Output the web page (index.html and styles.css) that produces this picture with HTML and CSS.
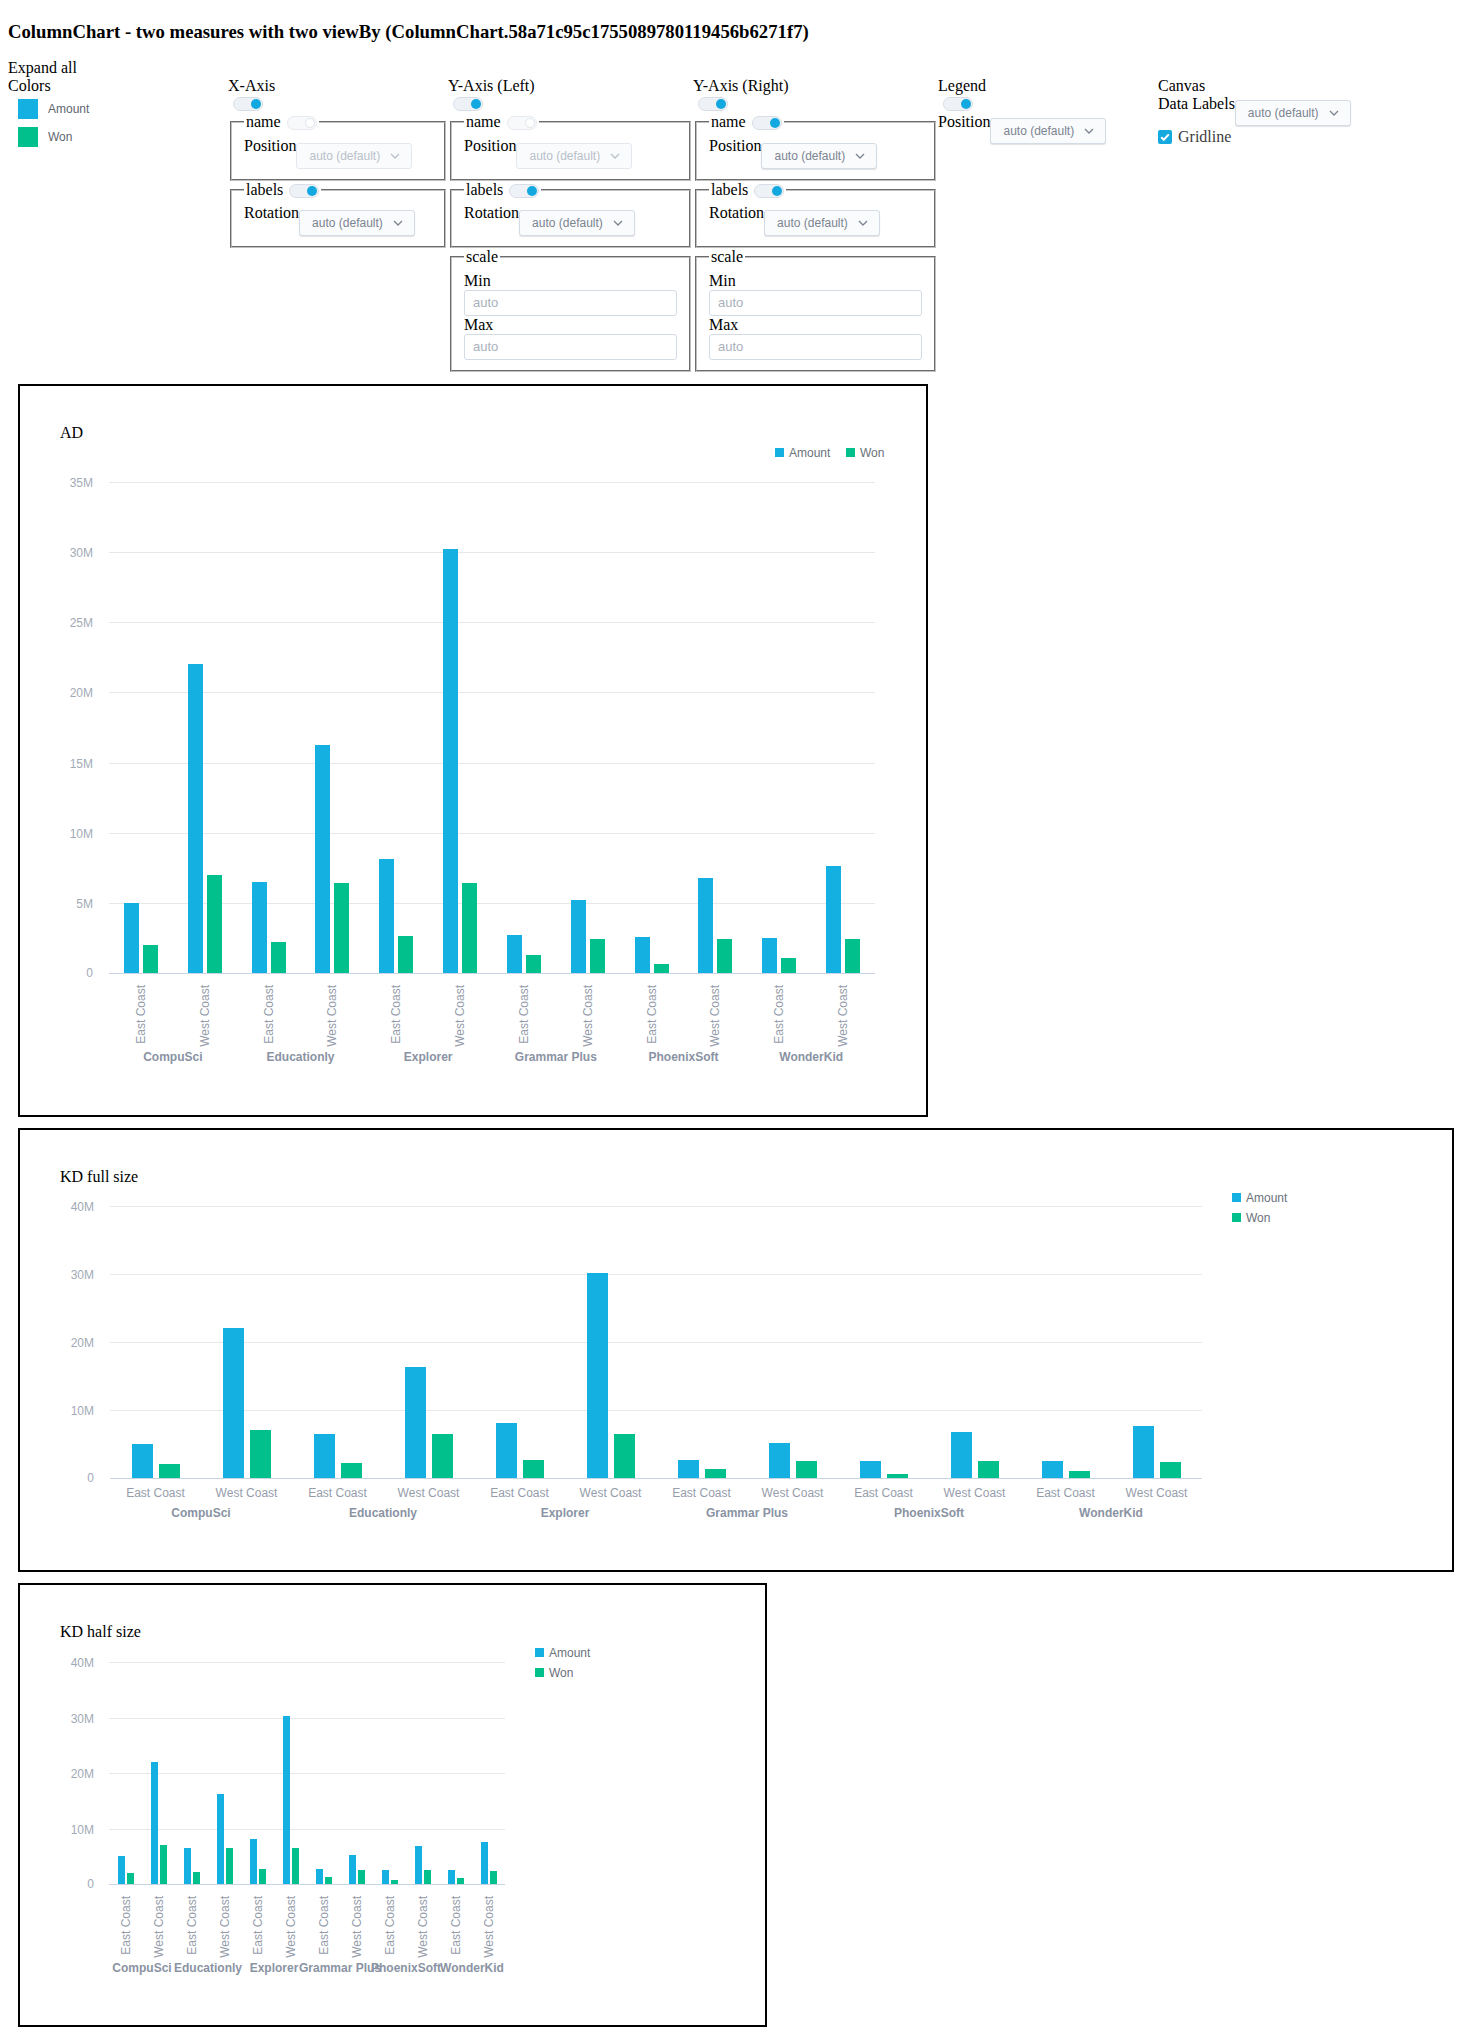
FILE: index.html
```html
<!DOCTYPE html>
<html lang="en">
<head>
    <meta charset="UTF-8">
    <title>ColumnChart - two measures with two viewBy</title>
    <link rel="stylesheet" href="styles.css">
</head>
<body>
    <h3 class="page-title">ColumnChart - two measures with two viewBy (ColumnChart.58a71c95c1755089780119456b6271f7)</h3>
    <div class="expand-all">Expand all</div>

    <div class="panel">
        <div class="col">
            <div>Colors</div>
            <div class="swatch-row"><span class="swatch amount"></span><span class="swatch-label">Amount</span></div>
            <div class="swatch-row"><span class="swatch won"></span><span class="swatch-label">Won</span></div>
        </div>

        <div class="col">
            <div>X-Axis</div>
            <span class="toggle"></span>
            <fieldset>
                <legend>name<span class="toggle inline off"></span></legend>
                <div class="field-row">
                    <label>Position</label>
                    <div class="select disabled">auto (default)<svg class="chevron" width="10" height="6" viewBox="0 0 10 6"><path d="M1 1l4 4 4-4"/></svg></div>
                </div>
            </fieldset>
            <fieldset>
                <legend>labels<span class="toggle inline"></span></legend>
                <div class="field-row">
                    <label>Rotation</label>
                    <div class="select">auto (default)<svg class="chevron" width="10" height="6" viewBox="0 0 10 6"><path d="M1 1l4 4 4-4"/></svg></div>
                </div>
            </fieldset>
        </div>

        <div class="col col-wide">
            <div>Y-Axis (Left)</div>
            <span class="toggle"></span>
            <fieldset>
                <legend>name<span class="toggle inline off"></span></legend>
                <div class="field-row">
                    <label>Position</label>
                    <div class="select disabled">auto (default)<svg class="chevron" width="10" height="6" viewBox="0 0 10 6"><path d="M1 1l4 4 4-4"/></svg></div>
                </div>
            </fieldset>
            <fieldset>
                <legend>labels<span class="toggle inline"></span></legend>
                <div class="field-row">
                    <label>Rotation</label>
                    <div class="select">auto (default)<svg class="chevron" width="10" height="6" viewBox="0 0 10 6"><path d="M1 1l4 4 4-4"/></svg></div>
                </div>
            </fieldset>
            <fieldset>
                <legend>scale</legend>
                <label class="block-label">Min</label>
                <input class="text-input" type="text" placeholder="auto">
                <label class="block-label">Max</label>
                <input class="text-input" type="text" placeholder="auto">
            </fieldset>
        </div>

        <div class="col col-wide">
            <div>Y-Axis (Right)</div>
            <span class="toggle"></span>
            <fieldset>
                <legend>name<span class="toggle inline"></span></legend>
                <div class="field-row">
                    <label>Position</label>
                    <div class="select">auto (default)<svg class="chevron" width="10" height="6" viewBox="0 0 10 6"><path d="M1 1l4 4 4-4"/></svg></div>
                </div>
            </fieldset>
            <fieldset>
                <legend>labels<span class="toggle inline"></span></legend>
                <div class="field-row">
                    <label>Rotation</label>
                    <div class="select">auto (default)<svg class="chevron" width="10" height="6" viewBox="0 0 10 6"><path d="M1 1l4 4 4-4"/></svg></div>
                </div>
            </fieldset>
            <fieldset>
                <legend>scale</legend>
                <label class="block-label">Min</label>
                <input class="text-input" type="text" placeholder="auto">
                <label class="block-label">Max</label>
                <input class="text-input" type="text" placeholder="auto">
            </fieldset>
        </div>

        <div class="col">
            <div>Legend</div>
            <span class="toggle"></span>
            <div class="field-row tight">
                <label>Position</label>
                <div class="select">auto (default)<svg class="chevron" width="10" height="6" viewBox="0 0 10 6"><path d="M1 1l4 4 4-4"/></svg></div>
            </div>
        </div>

        <div class="col col-canvas">
            <div>Canvas</div>
            <div class="field-row tight">
                <label>Data Labels</label>
                <div class="select">auto (default)<svg class="chevron" width="10" height="6" viewBox="0 0 10 6"><path d="M1 1l4 4 4-4"/></svg></div>
            </div>
            <div class="check-row">
                <span class="checkbox"><svg width="14" height="14" viewBox="0 0 14 14"><path d="M3.2 7.2l2.6 2.6 5-5.4"/></svg></span>
                <span class="check-label">Gridline</span>
            </div>
        </div>
    </div>

    <div class="chart-box chart-ad">
        <div class="chart-title">AD</div>
        <svg id="chartAD" width="906" height="673"></svg>
    </div>

    <div class="chart-box chart-full">
        <div class="chart-title">KD full size</div>
        <svg id="chartFull" width="1432" height="384"></svg>
    </div>

    <div class="chart-box chart-half">
        <div class="chart-title">KD half size</div>
        <svg id="chartHalf" width="745" height="384"></svg>
    </div>

    <script>
        // values in millions: [East Coast, West Coast] each as [Amount, Won]
        const DATA = [
            { name: 'CompuSci', regions: [[5.0, 2.0], [22.0, 7.0]] },
            { name: 'Educationly', regions: [[6.5, 2.2], [16.25, 6.45]] },
            { name: 'Explorer', regions: [[8.15, 2.65], [30.2, 6.4]] },
            { name: 'Grammar Plus', regions: [[2.7, 1.3], [5.2, 2.45]] },
            { name: 'PhoenixSoft', regions: [[2.55, 0.65], [6.8, 2.45]] },
            { name: 'WonderKid', regions: [[2.5, 1.05], [7.65, 2.4]] }
        ];
        const REGIONS = ['East Coast', 'West Coast'];
        const MEASURES = [
            { name: 'Amount', color: '#14b0e1' },
            { name: 'Won', color: '#02c08b' }
        ];

        function drawChart(id, cfg) {
            const svg = document.getElementById(id);
            const plotH = cfg.base - cfg.top;
            const slot = (cfg.right - cfg.left) / 12;
            let html = '';

            for (let v = cfg.step; v <= cfg.max; v += cfg.step) {
                const y = Math.round(cfg.base - v / cfg.max * plotH) + 0.5;
                html += `<line class="grid-line" x1="${cfg.left}" x2="${cfg.right}" y1="${y}" y2="${y}"/>`;
                html += `<text class="tick" x="${cfg.tickX}" y="${y + 4}" text-anchor="end">${v}M</text>`;
            }
            html += `<text class="tick" x="${cfg.tickX}" y="${cfg.base + 4}" text-anchor="end">0</text>`;

            DATA.forEach((group, gi) => {
                group.regions.forEach((vals, ri) => {
                    const cx = cfg.left + slot * (gi * 2 + ri + 0.5);
                    vals.forEach((v, mi) => {
                        const h = Math.round(v / cfg.max * plotH);
                        const x = Math.round(mi === 0 ? cx - cfg.gap / 2 - cfg.bar : cx + cfg.gap / 2);
                        html += `<rect x="${x}" y="${cfg.base - h}" width="${cfg.bar}" height="${h}" fill="${MEASURES[mi].color}"/>`;
                    });
                    if (cfg.rotate) {
                        const lx = cx + 4;
                        html += `<text class="region" x="${lx}" y="${cfg.labelY}" text-anchor="end" transform="rotate(-90 ${lx} ${cfg.labelY})">${REGIONS[ri]}</text>`;
                    } else {
                        html += `<text class="region" x="${cx}" y="${cfg.labelY}" text-anchor="middle">${REGIONS[ri]}</text>`;
                    }
                });
                const gx = cfg.left + slot * (gi * 2 + 1);
                html += `<text class="category" x="${gx}" y="${cfg.catY}" text-anchor="middle">${group.name}</text>`;
            });

            html += `<line class="axis-line" x1="${cfg.left}" x2="${cfg.right}" y1="${cfg.base + 0.5}" y2="${cfg.base + 0.5}"/>`;

            MEASURES.forEach((m, i) => {
                const lx = cfg.legend.vertical ? cfg.legend.x : cfg.legend.x + i * 71;
                const ly = cfg.legend.vertical ? cfg.legend.y + i * 20 : cfg.legend.y;
                html += `<rect x="${lx}" y="${ly}" width="9" height="9" fill="${m.color}"/>`;
                html += `<text class="legend-text" x="${lx + 14}" y="${ly + 9}">${m.name}</text>`;
            });

            svg.innerHTML = html;
        }

        drawChart('chartAD', {
            left: 89, right: 855, top: 40, base: 531, max: 35, step: 5, tickX: 73,
            bar: 15, gap: 4, rotate: true, labelY: 543, catY: 619,
            legend: { x: 755, y: 6 }
        });
        drawChart('chartFull', {
            left: 90, right: 1182, top: 20, base: 292, max: 40, step: 10, tickX: 74,
            bar: 21, gap: 6, rotate: false, labelY: 311, catY: 331,
            legend: { x: 1212, y: 7, vertical: true }
        });
        drawChart('chartHalf', {
            left: 89, right: 485, top: 21, base: 243, max: 40, step: 10, tickX: 74,
            bar: 7, gap: 2, rotate: true, labelY: 255, catY: 331,
            legend: { x: 515, y: 7, vertical: true }
        });
    </script>
</body>
</html>
```

FILE: styles.css
```css
body {
    margin: 8px;
    font-family: "Liberation Serif", "Times New Roman", serif;
    font-size: 16px;
    color: #000;
}
.page-title {
    font-size: 18.72px;
    font-weight: bold;
    margin: 13px 0 16px;
}
.panel {
    display: flex;
    align-items: flex-start;
}
.col {
    flex: none;
    width: 220px;
}
.col-wide {
    width: 245px;
}
.col-canvas {
    flex: 1;
}
.swatch-row {
    display: flex;
    align-items: center;
    margin: 4px 0 8px 10px;
}
.swatch {
    width: 20px;
    height: 20px;
}
.swatch.amount {
    background: #14b0e1;
}
.swatch.won {
    background: #02c08b;
}
.swatch-label {
    margin-left: 10px;
    font: 12px "Liberation Sans", Arial, sans-serif;
    color: #5f6670;
}
.toggle {
    display: block;
    position: relative;
    width: 28px;
    height: 12px;
    margin: 2px 0 2px 5px;
    border: 1px solid #d7dee7;
    border-radius: 8px;
    background: #eef2f6;
}
.toggle::after {
    content: "";
    position: absolute;
    right: 1px;
    top: 1px;
    width: 10px;
    height: 10px;
    border-radius: 50%;
    background: #13a8df;
}
.toggle.inline {
    display: inline-block;
    vertical-align: middle;
    margin: 0 0 0 6px;
}
.toggle.off {
    background: #f7f9fb;
    border-color: #e6eaef;
}
.toggle.off::after {
    width: 8px;
    height: 8px;
    background: #fff;
    border: 1px solid #e1e6ec;
}
fieldset {
    margin: 0 2px;
    padding: 5.6px 12px 10px;
    border: 2px groove #c0c0c0;
    min-width: 0;
}
legend {
    padding: 0 2px;
}
.field-row {
    display: flex;
    align-items: flex-start;
}
.field-row .select {
    margin-top: 6px;
}
.field-row.tight .select {
    margin-top: 5px;
}
.select {
    display: flex;
    align-items: center;
    justify-content: space-between;
    box-sizing: border-box;
    width: 116px;
    height: 26px;
    padding: 0 11px 0 12px;
    border: 1px solid #d3dbe5;
    border-radius: 3px;
    background: #fafbfc;
    box-shadow: 0 1px 1px rgba(0, 0, 0, 0.12);
    font: 12px "Liberation Sans", Arial, sans-serif;
    color: #7b8491;
}
.select.disabled {
    color: #b8c0ca;
    border-color: #e3e8ee;
    box-shadow: none;
}
.chevron path {
    fill: none;
    stroke: currentColor;
    stroke-width: 1.3;
}
.block-label {
    display: block;
}
.text-input {
    display: block;
    box-sizing: border-box;
    width: 100%;
    height: 26px;
    margin: 0;
    padding: 0 8px;
    border: 1px solid #d3dbe5;
    border-radius: 3px;
    font: 13px "Liberation Sans", Arial, sans-serif;
    color: #555;
}
.text-input::placeholder {
    color: #a9b1bb;
}
.check-row {
    display: flex;
    align-items: center;
    margin-top: 2px;
}
.checkbox {
    display: block;
    width: 14px;
    height: 14px;
    border-radius: 2px;
    background: #14a9df;
}
.checkbox svg {
    display: block;
}
.checkbox path {
    fill: none;
    stroke: #fff;
    stroke-width: 2;
}
.check-label {
    margin-left: 6px;
    color: #3d3d3d;
}
.chart-box {
    border: 2px solid #000;
    margin: 11px 0 0 10px;
    padding-top: 38px;
}
.chart-ad {
    width: 906px;
    margin-top: 12px;
}
.chart-full {
    width: 1432px;
}
.chart-half {
    width: 745px;
}
.chart-title {
    padding-left: 40px;
    font-size: 16px;
    line-height: 18px;
}
.chart-box svg {
    display: block;
    font-family: "Liberation Sans", Arial, sans-serif;
    font-size: 12px;
}
.grid-line {
    stroke: #e8e8e8;
    stroke-width: 1;
}
.axis-line {
    stroke: #c9d5e6;
    stroke-width: 1;
}
.tick {
    fill: #a2aab6;
}
.region {
    fill: #959dab;
}
.category {
    fill: #8a93a3;
    font-weight: bold;
}
.legend-text {
    fill: #6b717a;
}
```
